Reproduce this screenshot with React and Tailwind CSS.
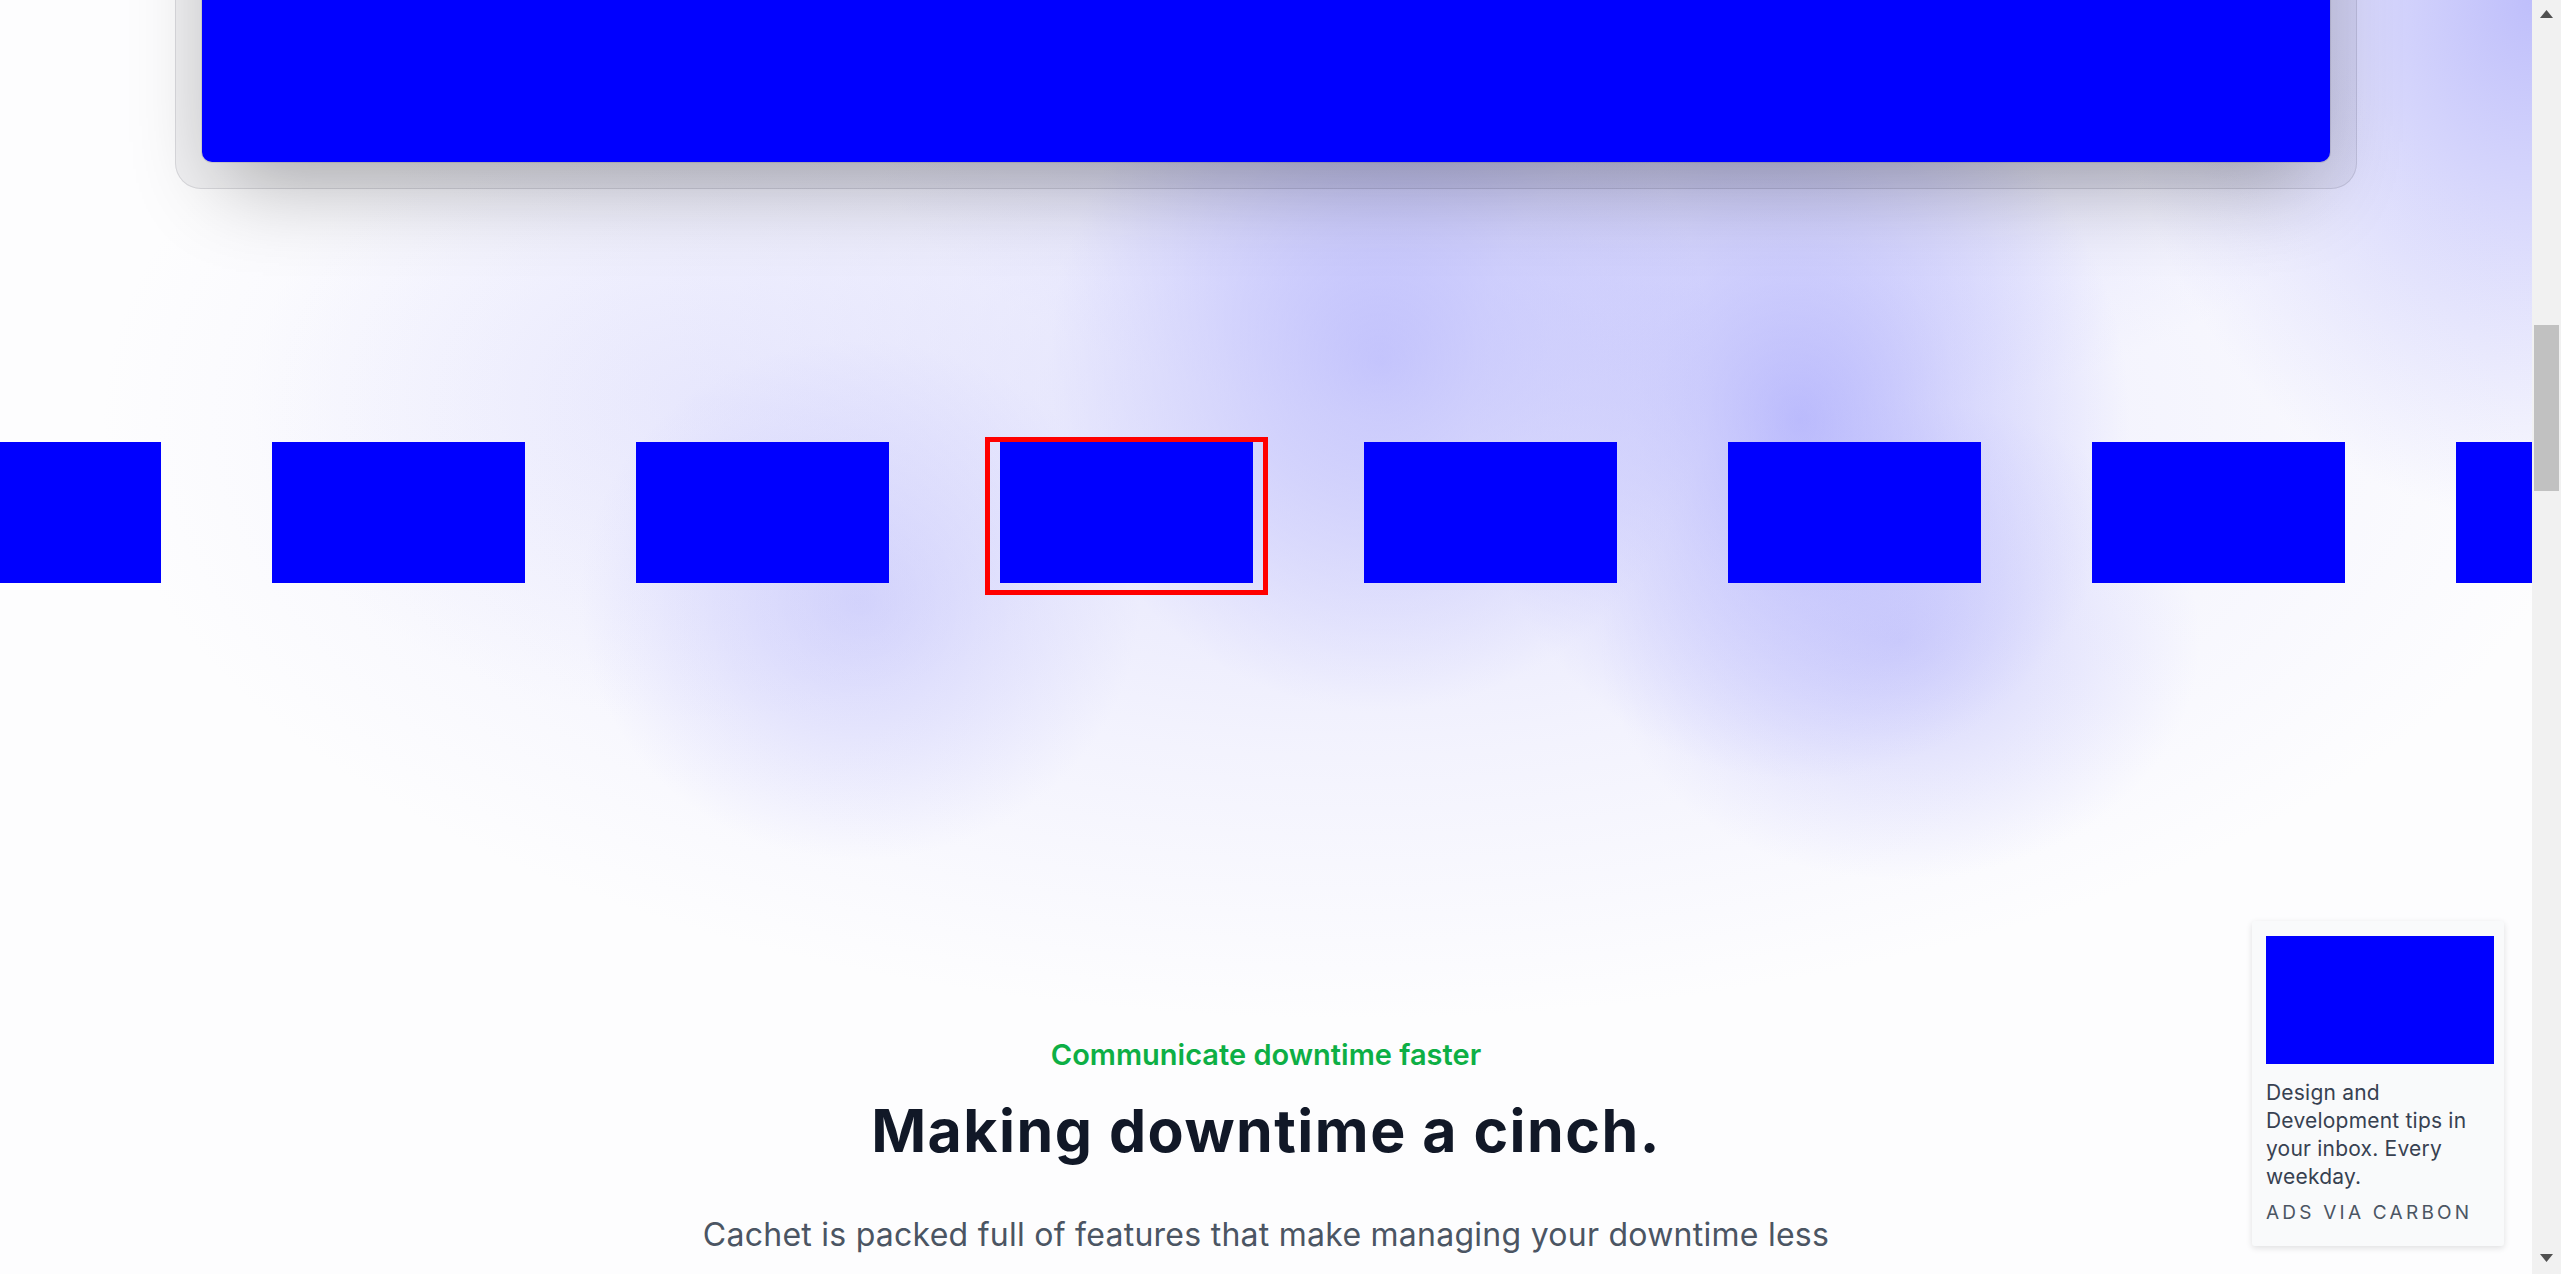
import React from "react";

const logos = [0, 1, 2, 3, 4, 5, 6, 7];

function LogoCloud() {
  return (
    <div className="mt-[253px] flex gap-[111px] ml-[-92px]">
      {logos.map(i =>
        i === 3 ? (
          <div key={i} className="shrink-0 -mx-[15px] -mt-[5px] -mb-[12px] border-[5px] border-[#ff0000] px-[10px] pb-[7px]">
            <div className="w-[253px] h-[141px] bg-[#0000ff]" />
          </div>
        ) : (
          <div key={i} className="shrink-0 w-[253px] h-[141px] bg-[#0000ff]" />
        )
      )}
    </div>
  );
}

function CarbonAd() {
  return (
    <div className="absolute bottom-[28px] right-[28px] w-[252px] rounded-[3px] bg-[#f9fafb] pt-[15px] pl-[14px] pr-[10px] pb-[21px] shadow-[0_2px_6px_rgba(0,0,0,0.12)]">
      <div className="w-[228px] h-[128px] bg-[#0000ff]" />
      <p className="mt-[15px] text-[21px] leading-[28px] tracking-[0.01em] text-[#374151]">
        Design and Development tips in your inbox. Every weekday.
      </p>
      <div className="mt-[10px] text-[19px] leading-[24px] uppercase tracking-[0.17em] text-[#4b5563]">
        Ads via Carbon
      </div>
    </div>
  );
}

function Scrollbar() {
  return (
    <div className="w-[29px] shrink-0 h-full bg-[#f1f1f1] flex flex-col items-center">
      <svg width="13" height="8" viewBox="0 0 13 8" className="mt-[10px]">
        <polygon points="6.5,0 13,8 0,8" fill="#505050" />
      </svg>
      <div className="mt-[307px] w-[25px] h-[166px] bg-[#c1c1c1]" />
      <div className="flex-1" />
      <svg width="13" height="8" viewBox="0 0 13 8" className="mb-[12px]">
        <polygon points="0,0 13,0 6.5,8" fill="#505050" />
      </svg>
    </div>
  );
}

export default function App() {
  return (
    <div className="flex h-[1274px] w-full overflow-hidden bg-white font-['Inter','Noto_Sans',sans-serif]">
      <main className="relative flex-1 overflow-hidden bg-[#fdfdfe] bg-[image:radial-gradient(1250px_600px_at_1350px_420px,rgba(212,212,252,0.65),rgba(212,212,252,0.25)_55%,rgba(212,212,252,0)),radial-gradient(330px_350px_at_1380px_360px,rgba(150,150,252,0.75),rgba(150,150,252,0.35)_50%,rgba(150,150,252,0)),radial-gradient(330px_360px_at_1800px_420px,rgba(150,150,252,0.8),rgba(150,150,252,0.35)_50%,rgba(150,150,252,0)),radial-gradient(280px_260px_at_860px_600px,rgba(170,170,250,0.5),rgba(170,170,250,0)),radial-gradient(300px_240px_at_1900px_640px,rgba(170,170,250,0.5),rgba(170,170,250,0)),radial-gradient(750px_320px_at_1620px_120px,rgba(190,190,250,0.55),rgba(190,190,250,0)),radial-gradient(420px_520px_at_2532px_0px,rgba(170,170,250,0.75),rgba(170,170,250,0)),radial-gradient(450px_320px_at_700px_400px,rgba(220,220,252,0.45),rgba(220,220,252,0))]">
        <div className="px-[175px]">
          <div className="mt-[-1165px] rounded-[26px] bg-gray-900/5 p-[27px] ring-1 ring-inset ring-gray-900/10">
            <div className="h-[1300px] rounded-[10px] bg-[#0000ff] shadow-[0_41px_82px_-20px_rgba(0,0,0,0.3)] ring-1 ring-gray-900/10" />
          </div>
        </div>

        <LogoCloud />

        <section className="text-center">
          <p className="mt-[449px] text-[29px] leading-[46px] font-semibold text-[#0daf45]">
            Communicate downtime faster
          </p>
          <h2 className="mt-[20px] text-[59px] leading-[65px] font-bold tracking-[0.025em] text-[#111827]">
            Making downtime a cinch.
          </h2>
          <p className="mx-auto mt-[44px] max-w-[1200px] text-[32px] leading-[56px] tracking-[0.008em] text-[#4b5563]">
            Cachet is packed full of features that make managing your downtime less
          </p>
        </section>

        <CarbonAd />
      </main>
      <Scrollbar />
    </div>
  );
}
